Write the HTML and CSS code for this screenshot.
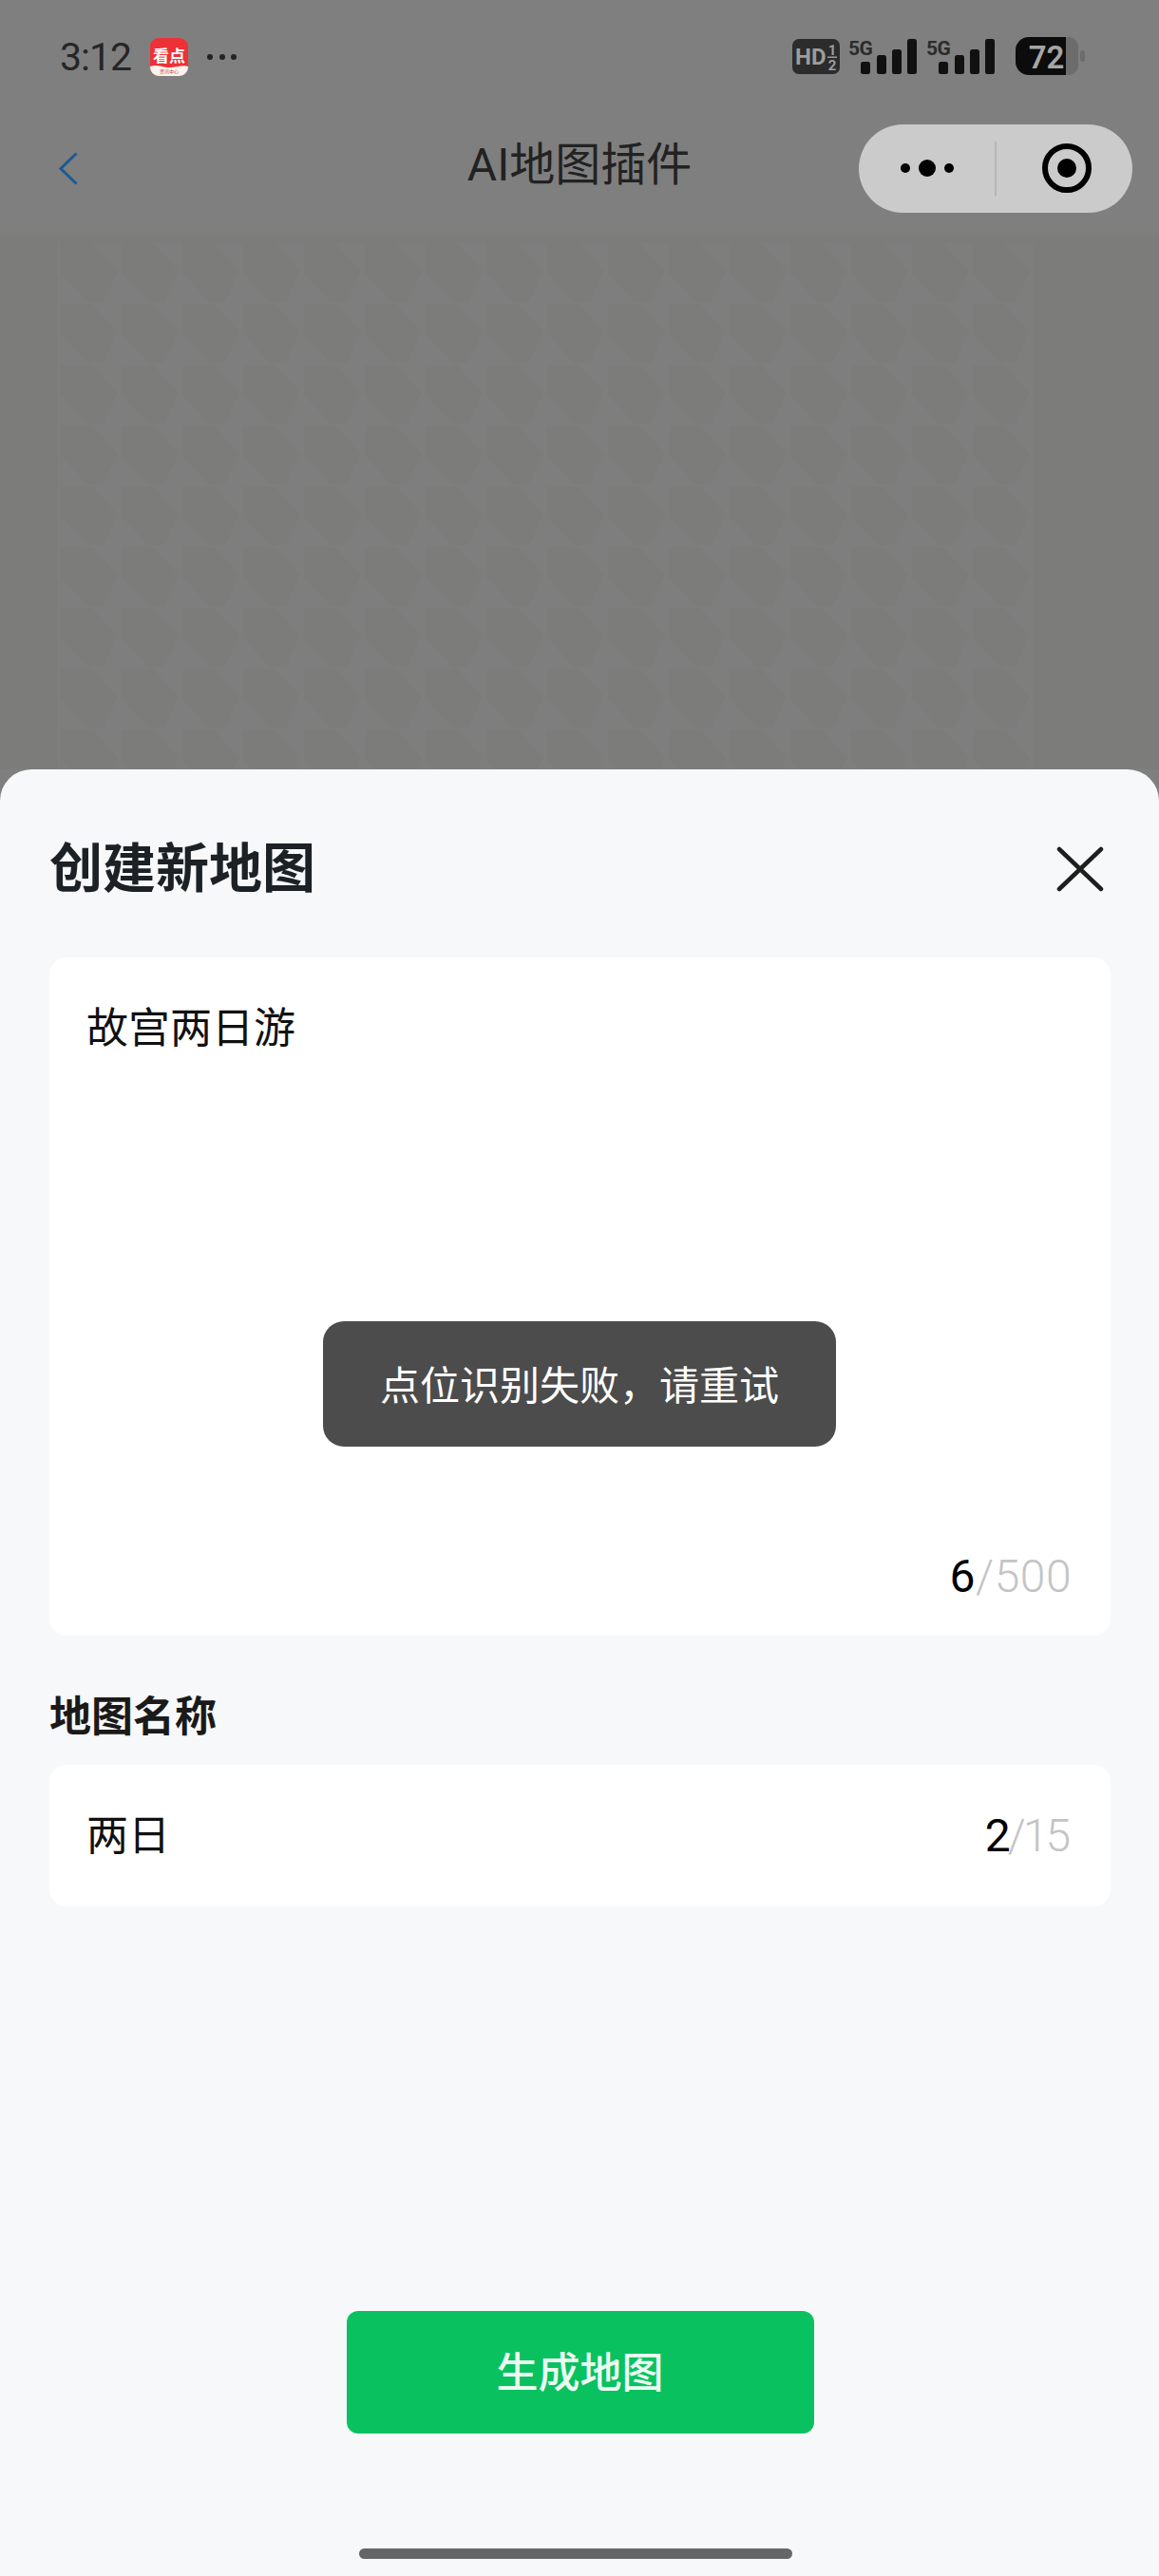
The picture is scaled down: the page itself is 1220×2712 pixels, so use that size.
FILE: index.html
```html
<!DOCTYPE html>
<html lang="zh-CN">
  <head>
    <meta charset="UTF-8" />
    <meta name="viewport" content="width=device-width, initial-scale=1.0" />
    <title>AI地图插件</title>
    <link rel="stylesheet" href="styles.css">
  </head>
  <body>
    <div class="page">
      <div class="status-bar">
        <div class="status-left">
          <span class="time">3:12</span>
          <svg class="app-icon" width="40" height="40" viewBox="0 0 40 40">
            <rect width="40" height="40" rx="9" fill="#ee3037" />
            <path d="M0 30 C8 27 14 32 22 31 C30 30 35 28 40 30 L40 31 A9 9 0 0 1 31 40 L9 40 A9 9 0 0 1 0 31 Z" fill="#fbf4ee" />
            <text class="app-icon-name" x="20" y="24.5" text-anchor="middle">看点</text>
            <text class="app-icon-sub" x="20" y="37" text-anchor="middle">资讯中心</text>
          </svg>
          <div class="more-dots"><i></i><i></i><i></i></div>
        </div>
        <svg class="status-right" width="310" height="50" viewBox="836 35 310 50">
          <rect x="836" y="41" width="50" height="37" rx="7" fill="#2c2c2c" />
          <text class="hd" x="839" y="68">HD</text>
          <text class="hd-small" x="878" y="58" text-anchor="middle">1</text>
          <rect x="873" y="59.5" width="10" height="1.5" fill="#9c9c9c" />
          <text class="hd-small" x="878" y="74" text-anchor="middle">2</text>

          <text class="net" x="895" y="58">5G</text>
          <rect x="908" y="65" width="10" height="13" rx="2.5" fill="#111" />
          <rect x="925" y="58" width="10" height="20" rx="2.5" fill="#111" />
          <rect x="941" y="52" width="10" height="26" rx="2.5" fill="#111" />
          <rect x="957" y="41" width="10" height="37" rx="2.5" fill="#111" />

          <text class="net" x="977" y="58">5G</text>
          <rect x="990" y="65" width="10" height="13" rx="2.5" fill="#111" />
          <rect x="1007" y="58" width="10" height="20" rx="2.5" fill="#111" />
          <rect x="1023" y="52" width="10" height="26" rx="2.5" fill="#111" />
          <rect x="1039" y="41" width="10" height="37" rx="2.5" fill="#111" />

          <path d="M1120 39 H1127 A10 10 0 0 1 1137 49 V69 A10 10 0 0 1 1127 79 H1120 Z" fill="#6c6c6c" />
          <path d="M1085 39 H1124 V79 H1085 A14 14 0 0 1 1071 65 V53 A14 14 0 0 1 1085 39 Z" fill="#0c0c0c" />
          <rect x="1139" y="53" width="5" height="12" rx="2.5" fill="#6c6c6c" />
          <text class="battery" x="1103.5" y="72" text-anchor="middle">72</text>
        </svg>
      </div>

      <div class="nav">
        <svg class="back" width="20" height="35" viewBox="0 0 20 35">
          <path d="M18.5 1.5 L2 17.5 L18.5 33.5" fill="none" stroke="#1c5a94" stroke-width="3" />
        </svg>
        <div class="nav-title">AI地图插件</div>
        <div class="capsule">
          <div class="capsule-dots"><i></i><b></b><i></i></div>
          <span class="capsule-line"></span>
          <div class="capsule-target"><b></b></div>
        </div>
      </div>

      <!-- faint map tiles behind the sheet -->
      <svg class="map-bg" width="1220" height="576" viewBox="0 0 1220 576">
        <defs>
          <linearGradient id="fade" x1="0" y1="0" x2="0" y2="1">
            <stop offset="0" stop-color="#7f7f7f" />
            <stop offset="1" stop-color="#7c7c7a" />
          </linearGradient>
          <pattern id="tile" x="0" y="22" width="64" height="64" patternUnits="userSpaceOnUse">
            <rect width="64" height="64" fill="#7e7e7e" />
            <path d="M0 0 H33 L60 29 L45 62 H28 L0 32 Z" fill="#7c7c7a" />
          </pattern>
        </defs>
        <rect width="1220" height="22" fill="url(#fade)" />
        <rect y="22" width="1220" height="554" fill="#7c7c7a" />
        <rect x="64" y="22" width="1024" height="554" fill="url(#tile)" />
        <rect x="61" y="22" width="2" height="554" fill="#7f7f7f" />
      </svg>

      <div class="sheet">
        <div class="sheet-head">
          <h1>创建新地图</h1>
          <svg class="close" width="50" height="48" viewBox="0 0 50 48">
            <path d="M3 3 L47 45 M47 3 L3 45" stroke="#1e1e1e" stroke-width="4.5" stroke-linecap="round" fill="none" />
          </svg>
        </div>

        <div class="card card-prompt">
          <div class="field-text">故宫两日游</div>
          <div class="count"><span class="count-now">6</span>/500</div>
        </div>

        <div class="field-label">地图名称</div>
        <div class="card card-name">
          <div class="field-text">两日</div>
          <div class="count"><span class="count-now">2</span>/15</div>
        </div>

        <button class="submit">生成地图</button>
        <div class="home-bar"></div>
      </div>

      <div class="toast">点位识别失败&#xFF0C;请重试</div>
    </div>
  </body>
</html>
```

FILE: styles.css
```css
body {
  margin: 0;
  font-family: Roboto, "Noto Sans CJK SC", sans-serif;
  background-color: #7f7f7f;
}

.page {
  position: relative;
  display: flex;
  flex-direction: column;
  height: 2712px;
  overflow: hidden;
}

/* status bar */
.status-bar {
  display: flex;
  justify-content: space-between;
  align-items: center;
  height: 120px;
  padding: 0 76px 0 63px;
  box-sizing: border-box;
}

.status-left {
  display: flex;
  align-items: center;
}

.time {
  width: 95px;
  font-size: 41px;
  line-height: 48px;
  letter-spacing: -1px;
  color: #262626;
}

.app-icon {
  display: block;
}

.app-icon-name {
  font-family: "Noto Sans CJK SC", sans-serif;
  font-size: 17px;
  font-weight: 700;
  fill: #fff;
}

.app-icon-sub {
  font-family: "Noto Sans CJK SC", sans-serif;
  font-size: 5px;
  fill: #c4464a;
}

.more-dots {
  display: flex;
  gap: 6.5px;
  margin-left: 20px;
}

.more-dots i {
  width: 6px;
  height: 6px;
  border-radius: 50%;
  background-color: #222;
}

.status-right {
  display: block;
}

.hd {
  font-size: 24px;
  font-weight: 700;
  fill: #9c9c9c;
}

.hd-small {
  font-size: 15px;
  font-weight: 700;
  fill: #9c9c9c;
}

.net {
  font-size: 21px;
  font-weight: 700;
  letter-spacing: -0.5px;
  fill: #2c2c2c;
}

.battery {
  font-size: 33px;
  font-weight: 600;
  fill: #a5a5a5;
}

/* nav */
.nav {
  display: grid;
  grid-template-columns: 1fr auto 1fr;
  align-items: center;
  height: 114px;
  padding: 0 28px;
}

.back {
  display: block;
  margin-left: 34px;
}

.nav-title {
  font-size: 48px;
  line-height: 60px;
  color: #222;
  margin-top: -6px;
}

.capsule {
  justify-self: end;
  display: flex;
  align-items: center;
  width: 288px;
  height: 93px;
  border-radius: 47px;
  background-color: #cbcbcb;
}

.capsule-dots {
  display: flex;
  align-items: center;
  justify-content: center;
  gap: 9px;
  width: 143px;
}

.capsule-dots i {
  width: 10px;
  height: 10px;
  border-radius: 50%;
  background-color: #000;
}

.capsule-dots b {
  width: 18px;
  height: 18px;
  border-radius: 50%;
  background-color: #000;
}

.capsule-line {
  width: 2px;
  height: 57px;
  background-color: #b6b6b6;
}

.capsule-target {
  display: flex;
  align-items: center;
  justify-content: center;
  width: 52px;
  height: 52px;
  margin-left: 48px;
  border: 6px solid #000;
  border-radius: 50%;
  box-sizing: border-box;
}

.capsule-target b {
  width: 20px;
  height: 20px;
  border-radius: 50%;
  background-color: #000;
}

.map-bg {
  display: block;
  flex: none;
}

/* bottom sheet */
.sheet {
  flex: 1;
  display: flex;
  flex-direction: column;
  padding: 65px 51px 0 52px;
  border-radius: 33px 33px 0 0;
  background-color: #f7f8fa;
}

.sheet-head {
  display: flex;
  justify-content: space-between;
  align-items: center;
  height: 80px;
  margin-bottom: 53px;
}

.sheet-head h1 {
  margin: 0;
  font-size: 56px;
  line-height: 80px;
  font-weight: 700;
  color: #1c2126;
}

.close {
  display: block;
  margin-right: 7px;
}

.card {
  display: flex;
  box-sizing: border-box;
  border-radius: 18px;
  background-color: #fff;
}

.card-prompt {
  flex-direction: column;
  justify-content: space-between;
  height: 714px;
  padding: 45px 41px 32px 39px;
}

.card-name {
  justify-content: space-between;
  align-items: center;
  height: 149px;
  padding: 0 45px 0 39px;
}

.field-text {
  font-size: 44px;
  line-height: 60px;
  color: #111;
}

.count {
  font-size: 48px;
  line-height: 60px;
  font-weight: 300;
  text-align: right;
  color: #c4c4c4;
}

.card-prompt .count {
  letter-spacing: 0.5px;
}

.card-name .count {
  letter-spacing: -3px;
}

.count-now {
  font-weight: 400;
  color: #000;
}

.field-label {
  margin: 56px 0 20px;
  font-size: 44px;
  line-height: 60px;
  font-weight: 700;
  color: #1a1a1a;
}

.submit {
  align-self: center;
  width: 492px;
  height: 129px;
  margin-top: 426px;
  padding: 0 0 6px;
  border: none;
  border-radius: 12px;
  font-family: inherit;
  font-size: 44px;
  font-weight: 500;
  color: #eafbf1;
  background-color: #0ac160;
}

.home-bar {
  width: 456px;
  height: 11px;
  margin: 121px 0 0 326px;
  border-radius: 6px;
  background-color: #666;
}

.toast {
  position: absolute;
  left: 340px;
  top: 1391px;
  display: flex;
  align-items: center;
  justify-content: center;
  width: 540px;
  height: 132px;
  padding-bottom: 3px;
  box-sizing: border-box;
  border-radius: 22px;
  font-size: 42px;
  color: #fff;
  background-color: #4c4c4c;
}
```
